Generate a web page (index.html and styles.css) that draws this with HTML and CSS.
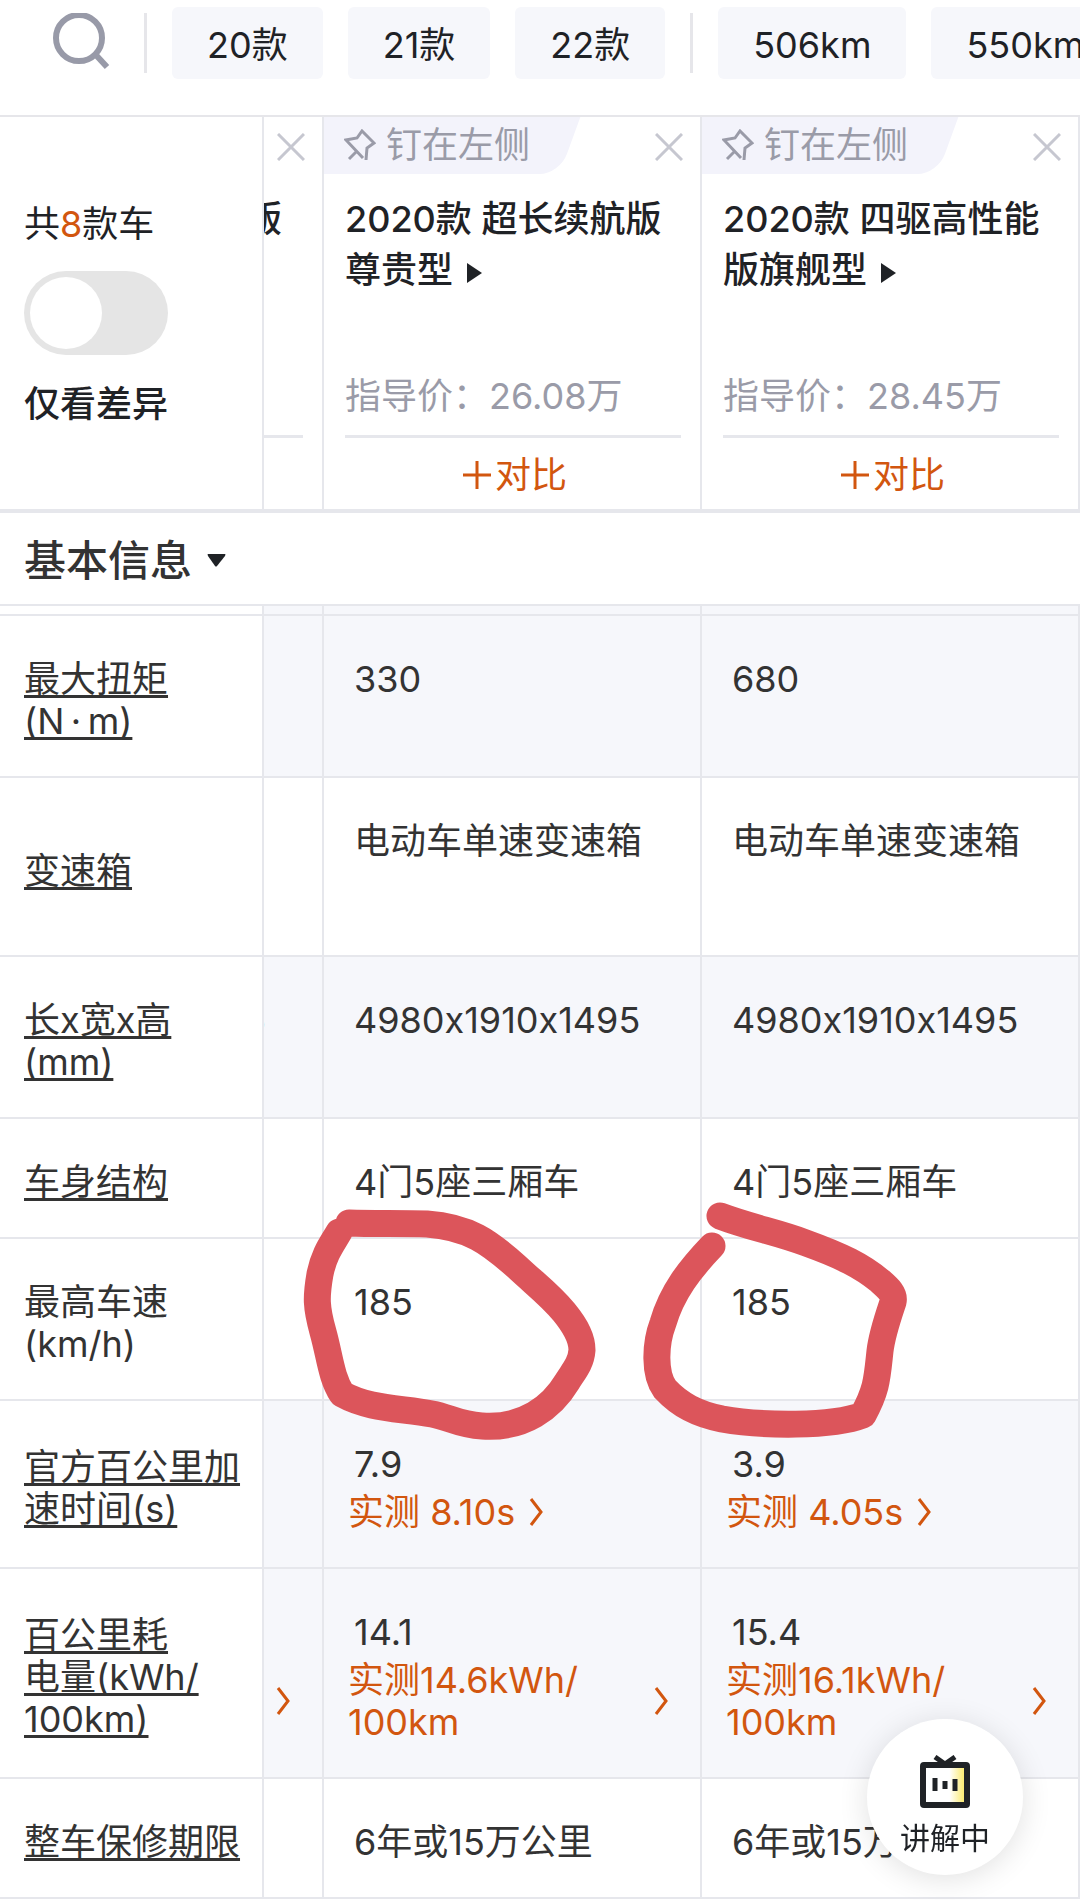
FILE: index.html
```html
<!DOCTYPE html>
<html lang="zh-CN">
<head>
  <meta charset="UTF-8" />
  <meta name="viewport" content="width=device-width, initial-scale=1" />
  <title>参数配置对比</title>
  <link rel="stylesheet" href="styles.css">
</head>
<body>
  <nav class="filters">
    <button class="search" aria-label="搜索">
      <svg width="58" height="60" viewBox="0 0 58 60" fill="none" stroke="#989aa8">
        <circle cx="26" cy="25" r="23" stroke-width="6"/>
        <path d="M42 41L54 54" stroke-width="6"/>
      </svg>
    </button>
    <span class="divider"></span>
    <button class="chip">20款</button>
    <button class="chip">21款</button>
    <button class="chip">22款</button>
    <span class="divider"></span>
    <button class="chip">506km</button>
    <button class="chip">550km</button>
  </nav>

  <table class="specs">
    <colgroup>
      <col class="col-label">
      <col class="col-peek">
      <col>
      <col>
    </colgroup>
    <thead>
      <tr>
        <th class="summary">
          <div>共<em>8</em>款车</div>
          <input type="checkbox" class="toggle" id="diffOnly">
          <label for="diffOnly">仅看差异</label>
        </th>
        <th class="car peek">
          <div class="car-top">
            <button class="close" aria-label="移除"><svg width="28" height="28" viewBox="0 0 28 28"><path d="M1 1L27 27M27 1L1 27"/></svg></button>
          </div>
          <div class="car-name"><span>版</span></div>
          <div class="price"></div>
        </th>
        <th class="car">
          <div class="car-top">
            <button class="pin">
              <svg width="32" height="32" viewBox="0 0 32 32"><path d="M5 30L13 22M19 29L2 11L13 9L18 2L30 14L23 19L22 31"/></svg>钉在左侧
            </button>
            <button class="close" aria-label="移除"><svg width="28" height="28" viewBox="0 0 28 28"><path d="M1 1L27 27M27 1L1 27"/></svg></button>
          </div>
          <a class="car-name" href="#">2020款 超长续航版尊贵型<svg class="tri" width="15" height="20" viewBox="0 0 15 20"><path d="M0 0L15 10L0 20Z"/></svg></a>
          <div class="price">指导价：26.08万</div>
          <button class="compare"><svg width="28" height="28" viewBox="0 0 28 28"><path d="M14 0V28M0 14H28"/></svg>对比</button>
        </th>
        <th class="car">
          <div class="car-top">
            <button class="pin">
              <svg width="32" height="32" viewBox="0 0 32 32"><path d="M5 30L13 22M19 29L2 11L13 9L18 2L30 14L23 19L22 31"/></svg>钉在左侧
            </button>
            <button class="close" aria-label="移除"><svg width="28" height="28" viewBox="0 0 28 28"><path d="M1 1L27 27M27 1L1 27"/></svg></button>
          </div>
          <a class="car-name" href="#">2020款 四驱高性能版旗舰型<svg class="tri" width="15" height="20" viewBox="0 0 15 20"><path d="M0 0L15 10L0 20Z"/></svg></a>
          <div class="price">指导价：28.45万</div>
          <button class="compare"><svg width="28" height="28" viewBox="0 0 28 28"><path d="M14 0V28M0 14H28"/></svg>对比</button>
        </th>
      </tr>
      <tr>
        <th class="section" colspan="4">
          <button>基本信息<svg width="19" height="13" viewBox="0 0 19 13"><path d="M1 0H18Q19 0 18 2L10 12Q9 13 8 12L1 2Q0 0 1 0Z"/></svg></button>
        </th>
      </tr>
    </thead>
    <tbody>
      <tr class="sliver tint"><th></th><td></td><td></td><td></td></tr>
      <tr class="tint">
        <th><a href="#">最大扭矩<br>(N&thinsp;·&thinsp;m)</a></th>
        <td></td>
        <td>330</td>
        <td>680</td>
      </tr>
      <tr class="tall">
        <th><a href="#">变速箱</a></th>
        <td></td>
        <td>电动车单速变速箱</td>
        <td>电动车单速变速箱</td>
      </tr>
      <tr class="tint">
        <th><a href="#">长x宽x高<br>(mm)</a></th>
        <td class="peek"><div class="cut">5</div></td>
        <td>4980x1910x1495</td>
        <td>4980x1910x1495</td>
      </tr>
      <tr>
        <th><a href="#">车身结构</a></th>
        <td></td>
        <td>4门5座三厢车</td>
        <td>4门5座三厢车</td>
      </tr>
      <tr>
        <th>最高车速<br>(km/h)</th>
        <td></td>
        <td>185
          <svg class="mark" width="378" height="162" viewBox="0 0 378 162">
            <path d="M25 -16C50 -15 78 -16 103 -15C145 -12 165 3 193 28C211 45 225 55 240 73C253 89 258 100 258 111C257 125 249 133 243 143C228 168 200 190 158 187C135 186 125 178 108 175C75 169 45 170 18 155C7 138 6 118 -1 93C-8 68 -8 58 -4 35C0 15 8 5 15 -7"/>
          </svg>
        </td>
        <td>185
          <svg class="mark" width="378" height="162" viewBox="0 0 378 162">
            <path d="M18 -23C50 -11 75 -7 104 4C140 17 160 27 178 42C186 49 193 55 191 63C186 78 180 95 178 112C175 140 175 150 161 176C130 188 60 187 20 180C-5 175 -22 166 -37 150C-48 135 -47 105 -39 84C-30 53 -12 30 10 7"/>
          </svg>
        </td>
      </tr>
      <tr class="tint">
        <th><a href="#">官方百公里加速时间(s)</a></th>
        <td></td>
        <td>7.9
          <a class="tested" href="#">实测 8.10s<svg width="14" height="28" viewBox="0 0 14 28"><path d="M2 1L12 14L2 27"/></svg></a>
        </td>
        <td>3.9
          <a class="tested" href="#">实测 4.05s<svg width="14" height="28" viewBox="0 0 14 28"><path d="M2 1L12 14L2 27"/></svg></a>
        </td>
      </tr>
      <tr class="tint">
        <th><a href="#">百公里耗<br>电量(kWh/<br>100km)</a></th>
        <td class="peek">&nbsp;
          <a class="tested wide" href="#" aria-label="实测"><span><br><br></span><svg width="14" height="28" viewBox="0 0 14 28"><path d="M2 1L12 14L2 27"/></svg></a>
        </td>
        <td>14.1
          <a class="tested wide" href="#"><span>实测14.6kWh/<br>100km</span><svg width="14" height="28" viewBox="0 0 14 28"><path d="M2 1L12 14L2 27"/></svg></a>
        </td>
        <td>15.4
          <a class="tested wide" href="#"><span>实测16.1kWh/<br>100km</span><svg width="14" height="28" viewBox="0 0 14 28"><path d="M2 1L12 14L2 27"/></svg></a>
        </td>
      </tr>
      <tr>
        <th><a href="#">整车保修期限</a></th>
        <td></td>
        <td>6年或15万公里</td>
        <td>6年或15万公里</td>
      </tr>
    </tbody>
  </table>

  <button class="live">
    <svg width="50" height="54" viewBox="0 0 50 54">
      <defs>
        <linearGradient id="screen">
          <stop offset="0.6" stop-color="#fff"/>
          <stop offset="0.9" stop-color="#fbec7c"/>
        </linearGradient>
      </defs>
      <path d="M15 2L25 9L35 2" fill="none" stroke="#1f2226" stroke-width="5"/>
      <rect x="3" y="10" width="44" height="40" rx="1" fill="url(#screen)" stroke="#1f2226" stroke-width="6"/>
      <path d="M15 23V36M25 26V34M35 24V36" stroke="#1f2226" stroke-width="5"/>
    </svg>
    讲解中
  </button>
</body>
</html>
```

FILE: styles.css
```css
* {
  box-sizing: border-box;
}
body {
  margin: 0;
  background: #fff;
  color: #333;
  font-family: Inter, "Noto Sans CJK SC", sans-serif;
  font-size: 36px;
  font-feature-settings: "calt" 0;
  line-height: 42px;
  overflow-x: hidden;
}
button {
  padding: 0;
  border: none;
  background: none;
  color: inherit;
  font: inherit;
  cursor: pointer;
}
a {
  color: inherit;
}
th {
  font-weight: 400;
  text-align: left;
}
svg {
  display: block;
  flex: none;
  fill: #1f2226;
}

/* filter bar */
.filters {
  display: flex;
  align-items: center;
  gap: 25px;
  height: 117px;
  padding: 0 0 30px 53px;
  border-bottom: 2px solid #e6e6ea;
  overflow: hidden;
}
.search {
  margin-right: 8px;
}
.search svg {
  fill: none;
}
.divider {
  flex: none;
  width: 3px;
  height: 60px;
  background: #e6e6ea;
}
.chip {
  flex: none;
  height: 72px;
  padding: 4px 35px 0;
  border-radius: 6px;
  background: #f6f7fb;
  color: #1f2226;
}

/* comparison table */
.specs {
  width: 100%;
  table-layout: fixed;
  border-collapse: separate;
  border-spacing: 0;
}
.col-label {
  width: 264px;
}
.col-peek {
  width: 60px;
}
.summary,
.car {
  height: 396px;
  border-right: 2px solid #e6e7ec;
  border-bottom: 4px solid #e6e7ec;
  color: #1f2226;
}
.summary {
  padding: 2px 24px 0;
}
.summary em {
  color: #d2560f;
  font-style: normal;
}
.summary label {
  display: block;
  font-weight: 500;
}
.toggle {
  appearance: none;
  display: block;
  width: 144px;
  height: 84px;
  margin: 26px 0 28px;
  padding: 6px;
  border-radius: 42px;
  background: #e5e5e5;
}
.toggle::before {
  content: "";
  display: block;
  width: 72px;
  height: 72px;
  border-radius: 50%;
  background: #fff;
}
.toggle:checked::before {
  margin-left: auto;
}
.car {
  padding: 0 19px 0 21px;
  vertical-align: top;
}
.car-top {
  display: flex;
  justify-content: space-between;
  height: 57px;
  margin: 0 -19px 0 -21px;
  overflow: hidden;
}
.pin {
  display: flex;
  align-items: center;
  gap: 10px;
  position: relative;
  padding: 0 50px 2px 20px;
  color: #9a9ba8;
}
.pin::before {
  content: "";
  position: absolute;
  z-index: -1;
  inset: 0 10px 0 -20px;
  border-radius: 0 0 20px 0;
  background: #f3f3fb;
  transform: skewX(-20deg);
}
.pin svg {
  fill: none;
  stroke: #9a9ba8;
  stroke-width: 3;
}
.close {
  align-self: flex-start;
  margin: 16px 17px 0 auto;
}
.close svg {
  fill: none;
  stroke: #c6c7d0;
  stroke-width: 3;
}
.car-name {
  display: block;
  height: 150px;
  padding-top: 20px;
  font-weight: 500;
  line-height: 51px;
  text-decoration: none;
}
.tri {
  display: inline-block;
  margin-left: 14px;
}
.price {
  height: 114px;
  padding-top: 51px;
  border-bottom: 3px solid #e6e7ec;
  color: #9a9ba8;
}
.compare {
  display: flex;
  align-items: center;
  justify-content: center;
  gap: 4px;
  width: 100%;
  height: 71px;
  padding: 3px 0 0 4px;
  color: #d2560f;
}
.compare svg {
  stroke: #d2560f;
  stroke-width: 3;
}
.car.peek {
  padding-left: 0;
}
.peek .car-top {
  margin-left: 0;
}
.peek .car-name {
  display: flex;
  justify-content: flex-end;
  padding-right: 21px;
  overflow: hidden;
}
.section {
  height: 93px;
  padding: 4px 24px 0;
  border-bottom: 2px solid #e6e7ec;
}
.section button {
  display: flex;
  align-items: center;
  gap: 15px;
  font-size: 42px;
  font-weight: 500;
}

/* spec rows */
tbody th,
tbody td {
  height: 120px;
  border-right: 2px solid #e6e7ec;
  border-bottom: 2px solid #e6e7ec;
}
tbody th {
  padding: 42px 22px 34px 24px;
}
tbody th a {
  text-decoration: underline;
  text-decoration-thickness: 3px;
  text-decoration-skip-ink: none;
  text-underline-offset: 3px;
}
tbody td {
  position: relative;
  padding: 42px 30px 34px;
  vertical-align: top;
}
.tint td {
  background: #f6f7fb;
}
.tall td {
  height: 179px;
}
.sliver th,
.sliver td {
  height: 10px;
  padding: 0;
}
.tested {
  display: flex;
  align-items: center;
  gap: 14px;
  margin: 6px 0 0 -6px;
  color: #d2560f;
  text-decoration: none;
}
.tested svg {
  fill: none;
  stroke: #d2560f;
  stroke-width: 3;
}
.tested.wide {
  justify-content: space-between;
  margin-right: 2px;
}
tbody td.peek {
  padding-left: 0;
}
/* the scrolled column runs under the label column */
.cut {
  display: flex;
  justify-content: flex-end;
  padding-right: 26px;
  overflow: hidden;
}

/* hand-drawn circles over the top speed values */
.mark {
  position: absolute;
  z-index: 1;
  top: 0;
  left: 0;
  overflow: visible;
  fill: none;
  stroke: #dc555b;
  stroke-width: 27;
  stroke-linecap: round;
  stroke-linejoin: round;
  pointer-events: none;
}

/* floating live button */
.live {
  display: flex;
  flex-direction: column;
  align-items: center;
  justify-content: center;
  gap: 8px;
  position: fixed;
  z-index: 2;
  right: 57px;
  bottom: 25px;
  width: 156px;
  height: 156px;
  padding-top: 20px;
  border-radius: 50%;
  background: #fff;
  box-shadow: 0 4px 30px rgba(0, 0, 0, 0.12);
  color: #1f2226;
  font-size: 30px;
}
```
